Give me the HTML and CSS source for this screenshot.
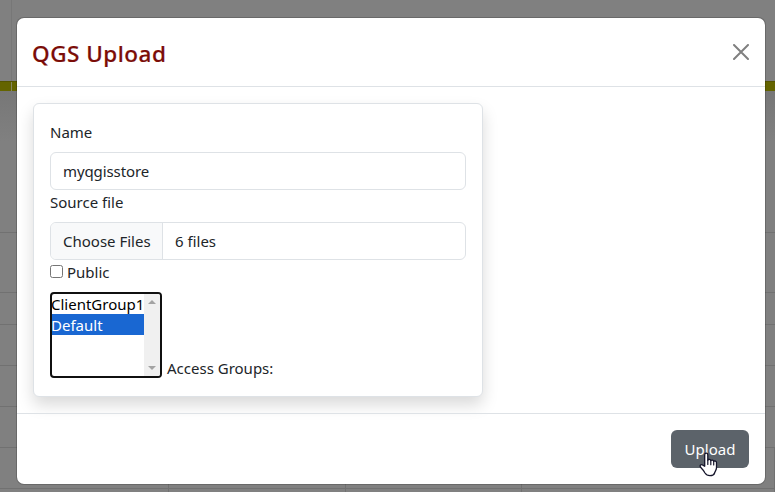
FILE: index.html
```html
<!DOCTYPE html>
<html lang="en">
<head>
<meta charset="utf-8">
<title>QGS Upload</title>
<link rel="stylesheet" href="styles.css">
</head>
<body>
<div class="page" aria-hidden="true">
  <div class="page-top"></div>
  <div class="page-bar"></div>
  <div class="page-intro"></div>
  <div class="row row-first"></div>
  <div class="row row-head"></div>
  <div class="row"></div>
  <div class="row"></div>
  <div class="row"></div>
  <div class="row row-cells"><i></i><i></i><i></i><i></i></div>
  <div class="row row-cells row-last"><i></i><i></i><i></i><i></i></div>
</div>
<div class="modal" role="dialog">
  <header class="modal-header">
    <h1 class="title">QGS Upload</h1>
    <button class="close" aria-label="Close"><svg width="16" height="16" viewBox="0 0 16 16"><path d="M1 1 15 15M15 1 1 15" fill="none" stroke="#808080" stroke-width="2" stroke-linecap="round"/></svg></button>
  </header>
  <main class="modal-body">
    <form class="card">
      <label class="label">Name</label>
      <div class="control"><span class="value value-name">myqgisstore</span></div>
      <label class="label">Source file</label>
      <div class="control"><span class="choose">Choose Files</span><span class="value">6 files</span></div>
      <label class="check"><span class="box"></span>Public</label>
      <div class="groups">
        <div class="list">
          <div class="options"><div class="option">ClientGroup1</div><div class="option selected">Default</div></div>
          <div class="scroll">
            <svg width="8" height="4" viewBox="0 0 8 4"><path d="M4 0 8 4H0z" fill="#a3a3a3"/></svg>
            <svg width="8" height="4" viewBox="0 0 8 4"><path d="M0 0H8L4 4z" fill="#a3a3a3"/></svg>
          </div>
        </div>
        <span class="groups-label">Access Groups:</span>
      </div>
    </form>
  </main>
  <footer class="modal-footer">
    <button class="upload">Upload</button>
  </footer>
</div>
<svg class="cursor" width="19" height="25" viewBox="0 0 19 25"><path d="M5.7 14.2V3C5.7.6 8.8.6 8.8 3v5.2c.4-1.2 2.8-1 3 .5.6-1 2.6-.7 2.9.7.8-.8 2.8-.4 2.8 1.3v5.1c0 2.3-1.6 3.6-1.9 5.2-.6 2-2 2.7-4.6 2.7-2.8 0-3.9-.8-5-2.7-.9-1.7-2.4-3.6-4.4-5.7-1.4-1.7.6-3.5 2.2-2.2z" fill="#fff" stroke="#15152b" stroke-width="1.3" stroke-linejoin="round"/><path d="M8.8 8v4.5M11.8 8.7v4M14.7 9.4v3.6" stroke="#15152b" stroke-width="1.2" stroke-linecap="round"/></svg>
</body>
</html>
```
FILE: styles.css
```css
* { box-sizing: border-box; }
body {
  margin: 0;
  height: 492px;
  overflow: hidden;
  position: relative;
  font: 15px/24px "Noto Sans", "Open Sans", sans-serif;
  color: #212529;
}
button { font: inherit; border: 0; padding: 0; }
.page { height: 492px; overflow: hidden; background: #808080; }
.page-top { height: 81px; margin-left: 11px; border-left: 1px solid #777; }
.page-bar { height: 10px; background: linear-gradient(90deg, transparent 11px, #858560 11px 12px, transparent 12px) #646400; border-top: 1px solid #555500; }
.page-intro { height: 141px; background: linear-gradient(#777, #808080 50px); }
.row { height: 41px; border-top: 1px solid #717171; }
.row-first { height: 60px; }
.row-head { height: 32px; }
.row-cells { display: grid; grid-template-columns: 169px 177px 176px 1fr; }
.row-cells i { border-right: 1px solid #717171; }
.row-last { height: 4px; }
.modal {
  position: absolute;
  left: 16px;
  top: 17px;
  width: 750px;
  height: 468px;
  display: flex;
  flex-direction: column;
  background: #fff;
  background-clip: padding-box;
  border: 1px solid rgba(0, 0, 0, .175);
  border-radius: 8px;
}
.modal-header {
  height: 69px;
  display: flex;
  align-items: center;
  justify-content: space-between;
  padding: 0 16px;
  border-bottom: 1px solid #dee2e6;
}
.title { margin: 4px 0 0 -1px; font-size: 22.5px; line-height: 36px; font-weight: 500; letter-spacing: .5px; color: #7b0d08; -webkit-text-stroke: .2px #7b0d08; }
.close { width: 16px; height: 16px; display: flex; background: none; }
.modal-body { flex: 1; padding: 16px; }
.card {
  width: 450px;
  height: 294px;
  margin: 0;
  padding: 16px;
  border: 1px solid #dee2e6;
  border-radius: 6px;
  background: #fff;
  box-shadow: 0 8px 16px rgba(0, 0, 0, .15);
}
.label { display: block; height: 32px; }
.control {
  height: 38px;
  display: flex;
  align-items: stretch;
  line-height: 36px;
  border: 1px solid #dee2e6;
  border-radius: 6px;
  overflow: hidden;
}
.value { padding-left: 12px; }
.value-name { letter-spacing: -.1px; }
.choose { width: 112px; padding-left: 12px; background: #f8f9fa; border-right: 1px solid #dee2e6; }
.check { display: flex; align-items: center; gap: 4px; height: 24px; }
.box { width: 13px; height: 13px; border: 1px solid #767676; border-radius: 2.5px; margin-top: -1px; }
.groups { display: flex; align-items: flex-end; gap: 5px; margin-top: 8px; }
.list { width: 112px; height: 86px; display: flex; border: 2px solid #101010; border-radius: 4px; overflow: hidden; color: #000; }
.options { width: 92px; }
.option { height: 21px; line-height: 22px; text-indent: -1px; white-space: nowrap; }
.options .option:first-child { height: 20px; line-height: 21px; }
.selected { background: #1967d2; color: #fff; }
.scroll { flex: 1; display: flex; flex-direction: column; justify-content: space-between; align-items: center; padding: 6px 0; background: #f0f0f0; }
.groups-label { margin-bottom: -2px; }
.modal-footer { height: 71px; display: flex; justify-content: flex-end; align-items: center; padding: 0 16px; border-top: 1px solid #dee2e6; }
.upload { width: 78px; height: 38px; color: #fff; background: #5c636a; border-radius: 6px; }
.cursor { position: absolute; left: 699px; top: 452px; }
```
